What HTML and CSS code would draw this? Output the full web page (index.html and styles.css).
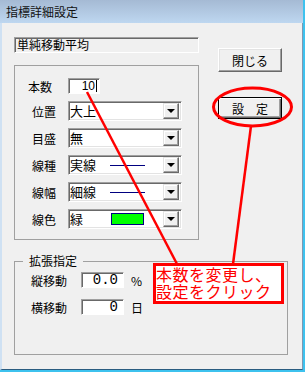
FILE: index.html
```html
<!DOCTYPE html>
<html lang="ja">
<head>
  <meta charset="UTF-8">
  <meta name="viewport" content="width=device-width, initial-scale=1.0">
  <title>指標詳細設定</title>
  <link rel="stylesheet" href="styles.css">
</head>
<body>
  <div class="window">
    <div class="titlebar">指標詳細設定</div>
    <div class="client">
      <div class="top">
        <div class="left">
          <div class="namebox">単純移動平均</div>
          <div class="group">
            <div class="row first">
              <span class="label shift">本数</span>
              <div class="num-input">10<span class="caret"></span></div>
            </div>
            <div class="row">
              <span class="label">位置</span>
              <div class="combo"><span class="value">大上</span><span class="drop"></span></div>
            </div>
            <div class="row">
              <span class="label">目盛</span>
              <div class="combo"><span class="value">無</span><span class="drop"></span></div>
            </div>
            <div class="row">
              <span class="label">線種</span>
              <div class="combo"><span class="value">実線<span class="line-sample"></span></span><span class="drop"></span></div>
            </div>
            <div class="row">
              <span class="label">線幅</span>
              <div class="combo"><span class="value">細線<span class="line-sample"></span></span><span class="drop"></span></div>
            </div>
            <div class="row">
              <span class="label">線色</span>
              <div class="combo"><span class="value">緑<span class="swatch"></span></span><span class="drop"></span></div>
            </div>
          </div>
        </div>
        <div class="right">
          <button class="btn">閉じる</button>
          <button class="btn btn-default">設　定</button>
        </div>
      </div>
      <fieldset class="ext">
        <legend>拡張指定</legend>
        <div class="ext-row">
          <span class="ext-label">縦移動</span>
          <div class="ext-input">0.0</div>
          <span class="unit">%</span>
        </div>
        <div class="ext-row second">
          <span class="ext-label">横移動</span>
          <div class="ext-input">0</div>
          <span class="unit">日</span>
        </div>
      </fieldset>
    </div>

    <svg class="marks" width="305" height="372" viewBox="0 0 305 372">
      <ellipse cx="252.5" cy="107" rx="39" ry="19" fill="none" stroke="#ff0000" stroke-width="3"/>
      <line x1="87" y1="92" x2="177" y2="264" stroke="#ff0000" stroke-width="2.5"/>
      <line x1="251" y1="126" x2="233" y2="264" stroke="#ff0000" stroke-width="2.5"/>
    </svg>
    <div class="note">本数を変更し、<br>設定をクリック</div>
  </div>
</body>
</html>
```

FILE: styles.css
```css
body {
  margin: 0;
  background-color: #f0f0f0;
  font-family: "Noto Sans CJK JP", sans-serif;
  font-size: 12px;
  color: #000;
}
.window {
  position: relative;
  width: 305px;
  height: 372px;
  box-sizing: border-box;
  border-right: 2px solid #3ec2ee;
  border-bottom: 2px solid #3ec2ee;
  display: flex;
  flex-direction: column;
}
.titlebar {
  height: 23px;
  box-sizing: border-box;
  padding: 5px 0 0 6px;
  background: linear-gradient(#a5bad4, #bed7f0);
  font-size: 12px;
  line-height: 14px;
  color: #111;
}
.client {
  flex: 1;
  border-left: 2px solid #cfe1f3;
  border-right: 1px solid #7d98b3;
  border-bottom: 1px solid #2a5c80;
  padding: 14px 0 0 12px;
}
.top {
  display: flex;
  align-items: flex-start;
}
.left {
  width: 185px;
}
.namebox {
  height: 16px;
  box-sizing: border-box;
  border: 1px solid;
  border-color: #a0a0a0 #fff #fff #a0a0a0;
  box-shadow: inset 1px 1px #696969;
  padding-left: 2px;
  line-height: 14px;
}
.group {
  margin-top: 12px;
  border: 1px solid #a0a0a0;
  padding: 12px 0 10px 17px;
}
.row {
  display: flex;
  align-items: center;
  height: 20px;
  margin-top: 7px;
}
.row.first {
  height: 16px;
  margin-top: 0;
  margin-bottom: 1px;
}
.label {
  width: 36px;
  flex: none;
}
.label.shift {
  margin-left: -4px;
  width: 40px;
}
.num-input {
  width: 32px;
  height: 16px;
  box-sizing: border-box;
  background-color: #fff;
  border: 1px solid;
  border-color: #a0a0a0 #fff #fff #a0a0a0;
  box-shadow: inset 1px 1px #696969;
  display: flex;
  align-items: center;
  justify-content: flex-end;
  padding-right: 2px;
  font-family: "Liberation Sans", sans-serif;
  font-size: 12px;
}
.caret {
  width: 1px;
  height: 12px;
  margin-left: 1px;
  background-color: #000;
}
.combo {
  width: 114px;
  height: 20px;
  box-sizing: border-box;
  background-color: #fff;
  border: 1px solid;
  border-color: #a0a0a0 #fff #fff #a0a0a0;
  box-shadow: inset 1px 1px #696969, inset -1px -1px #e3e3e3;
  padding: 1px;
  display: flex;
  font-size: 13px;
}
.value {
  flex: 1;
  display: flex;
  align-items: center;
  line-height: 16px;
}
.line-sample {
  width: 35px;
  height: 1px;
  margin-left: 14px;
  background-color: #000080;
}
.swatch {
  width: 33px;
  height: 12px;
  box-sizing: border-box;
  margin-left: 28px;
  border: 1px solid #000080;
  background-color: #00ff00;
}
.drop {
  width: 16px;
  height: 16px;
  box-sizing: border-box;
  margin-right: 1px;
  background-color: #f0f0f0;
  border: 1px solid;
  border-color: #e3e3e3 #696969 #696969 #e3e3e3;
  box-shadow: inset -1px -1px #a0a0a0, inset 1px 1px #fff;
  display: flex;
  align-items: center;
  justify-content: center;
}
.drop::after {
  content: "";
  border-left: 4px solid transparent;
  border-right: 4px solid transparent;
  border-top: 4px solid #000;
}
.right {
  margin-left: 19px;
  width: 64px;
  display: flex;
  flex-direction: column;
}
.btn {
  height: 24px;
  margin-top: 11px;
  padding: 0;
  background-color: #f0f0f0;
  border: 1px solid;
  border-color: #fff #696969 #696969 #fff;
  box-shadow: inset -1px -1px #a0a0a0, inset 1px 1px #e3e3e3;
  font-family: "Noto Sans CJK JP", sans-serif;
  font-size: 12px;
  color: #000;
}
.btn-default {
  height: 22px;
  margin-top: 25px;
  border: 1px solid #000;
  box-shadow: inset 1px 1px #fff, inset -1px -1px #696969, inset -2px -2px #a0a0a0;
}
.ext {
  margin: 15px 0 0;
  width: 274px;
  box-sizing: border-box;
  min-width: 0;
  border: 1px solid #a0a0a0;
  padding: 5px 0 39px 16px;
}
.ext legend {
  margin-left: -8px;
  padding: 0 6px;
  font-size: 12px;
  line-height: 12px;
}
.ext-row {
  display: flex;
  align-items: center;
  height: 16px;
}
.ext-row.second {
  margin-top: 11px;
}
.ext-label {
  width: 50px;
  flex: none;
}
.ext-input {
  width: 43px;
  height: 16px;
  box-sizing: border-box;
  background-color: #fff;
  border: 1px solid;
  border-color: #a0a0a0 #fff #fff #a0a0a0;
  box-shadow: inset 1px 1px #696969;
  padding-right: 5px;
  text-align: right;
  font-family: "Liberation Mono", monospace;
  font-size: 14px;
  line-height: 14px;
}
.unit {
  margin-left: 7px;
}
.marks {
  position: absolute;
  left: 0;
  top: 0;
  pointer-events: none;
}
.note {
  position: absolute;
  left: 153px;
  top: 263px;
  width: 131px;
  height: 41px;
  box-sizing: border-box;
  border: 3px solid #ff0000;
  background-color: #fff;
  color: #ff0000;
  font-size: 16px;
  letter-spacing: 0.5px;
  line-height: 17px;
  padding-left: 0;
  white-space: nowrap;
}
```
